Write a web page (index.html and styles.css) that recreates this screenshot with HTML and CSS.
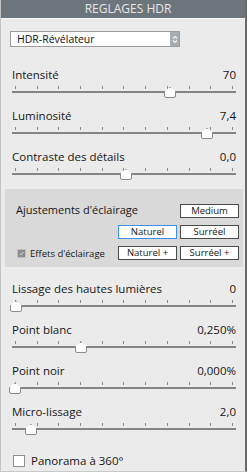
FILE: index.html
```html
<!DOCTYPE html>
<html lang="fr">
<head>
    <meta charset="UTF-8">
    <title>Réglages HDR</title>
    <link rel="stylesheet" href="styles.css">
</head>
<body>
    <div class="panel">
        <div class="panelHead">REGLAGES HDR</div>

        <div class="preset">
            <div class="presetText">HDR-Révélateur</div>
            <div class="presetArrow">
                <svg width="6" height="9" viewBox="0 0 6 9">
                    <path d="M1 3.5 L3 1.5 L5 3.5 M1 5.5 L3 7.5 L5 5.5" fill="none" stroke="#f4f4f4" stroke-width="1.2"/>
                </svg>
            </div>
        </div>

        <!-- curseurs du haut -->
        <div class="sliders top">
            <div class="slider">
                <div class="sliderLabel"><span>Intensité</span><span>70</span></div>
                <div class="sliderTrack">
                    <div class="ticks"><i></i><i></i><i></i><i></i><i></i><i></i><i></i><i></i><i></i><i></i><i></i></div>
                    <div class="line"></div>
                    <div class="thumb" style="left: 152px"></div>
                </div>
            </div>
            <div class="slider">
                <div class="sliderLabel"><span>Luminosité</span><span>7,4</span></div>
                <div class="sliderTrack">
                    <div class="ticks"><i></i><i></i><i></i><i></i><i></i><i></i><i></i><i></i><i></i><i></i><i></i></div>
                    <div class="line"></div>
                    <div class="thumb" style="left: 189px"></div>
                </div>
            </div>
            <div class="slider">
                <div class="sliderLabel"><span>Contraste des détails</span><span>0,0</span></div>
                <div class="sliderTrack">
                    <div class="ticks"><i></i><i></i><i></i><i></i><i></i><i></i><i></i><i></i><i></i><i></i><i></i></div>
                    <div class="line"></div>
                    <div class="thumb" style="left: 108px"></div>
                </div>
            </div>
        </div>

        <!-- ajustements d'eclairage -->
        <div class="lighting">
            <div class="lightRow">
                <div class="lightTitle">Ajustements d'éclairage</div>
                <div class="btn">Medium</div>
            </div>
            <div class="lightRow">
                <div class="btn selected">Naturel</div>
                <div class="btn">Surréel</div>
            </div>
            <div class="lightRow">
                <label class="effects">
                    <span class="checkOn">
                        <svg width="5" height="5" viewBox="0 0 5 5"><path d="M0.8 2.6 L2 3.8 L4.2 1" fill="none" stroke="#e8e8e8" stroke-width="0.9"/></svg>
                    </span>Effets d'éclairage</label>
                <div class="btn">Naturel +</div>
                <div class="btn">Surréel +</div>
            </div>
        </div>

        <!-- curseurs du bas -->
        <div class="sliders bottom">
            <div class="slider">
                <div class="sliderLabel"><span>Lissage des hautes lumières</span><span>0</span></div>
                <div class="sliderTrack">
                    <div class="ticks"><i></i><i></i><i></i><i></i><i></i><i></i><i></i><i></i><i></i><i></i><i></i></div>
                    <div class="line"></div>
                    <div class="thumb" style="left: -2px"></div>
                </div>
            </div>
            <div class="slider">
                <div class="sliderLabel"><span>Point blanc</span><span>0,250%</span></div>
                <div class="sliderTrack">
                    <div class="ticks"><i></i><i></i><i></i><i></i><i></i><i></i><i></i><i></i><i></i><i></i><i></i></div>
                    <div class="line"></div>
                    <div class="thumb" style="left: 63px"></div>
                </div>
            </div>
            <div class="slider">
                <div class="sliderLabel"><span>Point noir</span><span>0,000%</span></div>
                <div class="sliderTrack">
                    <div class="ticks"><i></i><i></i><i></i><i></i><i></i><i></i><i></i><i></i><i></i><i></i><i></i></div>
                    <div class="line"></div>
                    <div class="thumb" style="left: -3px"></div>
                </div>
            </div>
            <div class="slider">
                <div class="sliderLabel"><span>Micro-lissage</span><span>2,0</span></div>
                <div class="sliderTrack">
                    <div class="ticks"><i></i><i></i><i></i><i></i><i></i><i></i><i></i><i></i><i></i><i></i><i></i></div>
                    <div class="line"></div>
                    <div class="thumb" style="left: 13px"></div>
                </div>
            </div>
        </div>

        <label class="panorama"><span class="checkOff"></span>Panorama à 360°</label>
    </div>
</body>
</html>
```

FILE: styles.css
```css
body {
    margin: 0;
    font-family: "Open Sans", "DejaVu Sans", sans-serif;
    color: #151515;
    background: #ffffff;
}

.panel {
    width: 247px;
    height: 472px;
    box-sizing: border-box;
    background: #ebebeb;
    border-left: 1px solid #c4c4c4;
    border-right: 2px solid #6a6a6a;
    border-bottom: 1px solid #c8c8c8;
}

.panelHead {
    height: 18px;
    line-height: 18px;
    background: #6c747c;
    color: #e6e6e6;
    font-size: 12px;
    text-align: center;
    padding-left: 10px;
    border-bottom: 1px solid #f6f6f6;
}

.preset {
    display: flex;
    width: 170px;
    height: 16px;
    margin: 12px 0 0 9px;
    box-sizing: border-box;
    border: 1px solid #9c9c9c;
    background: #ffffff;
}

.presetText {
    flex: 1;
    font-size: 10.5px;
    line-height: 14px;
    padding-left: 6px;
    color: #111;
}

.presetArrow {
    width: 9px;
    background: #a8adb2;
    display: flex;
    align-items: center;
    justify-content: center;
}

.sliders {
    display: flex;
    flex-direction: column;
    gap: 10px;
    margin: 0 9px 0 11px;
}

.sliders.top {
    margin-top: 21px;
}

.sliders.bottom {
    margin-top: 15px;
}

.sliderLabel {
    display: flex;
    justify-content: space-between;
    font-size: 11.5px;
    line-height: 14px;
}

.sliderTrack {
    position: relative;
    height: 17px;
}

.ticks {
    display: flex;
    justify-content: space-between;
    padding: 4px 3px 0 3px;
}

.ticks i {
    width: 1px;
    height: 3px;
    background: #8a8a8a;
}

.line {
    height: 2px;
    margin-top: 2px;
    background: #858585;
}

.thumb {
    position: absolute;
    top: 5px;
    width: 12px;
    height: 11px;
    box-sizing: border-box;
    background: #ffffff;
    border: 1px solid #8a8a8a;
    border-radius: 2px;
    clip-path: polygon(50% 0, 100% 40%, 100% 100%, 0 100%, 0 40%);
}

.lighting {
    margin: 8px 2px 0 4px;
    padding: 15px 4px 7px 11px;
    background: #d9d9d9;
    display: flex;
    flex-direction: column;
    gap: 7px;
}

.lightRow {
    display: flex;
    justify-content: flex-end;
    align-items: center;
    gap: 3px;
}

.lightTitle {
    flex: 1;
    font-size: 11px;
    margin-top: -4px;
}

.btn {
    width: 59px;
    height: 14px;
    box-sizing: border-box;
    border: 1px solid #4a4a4a;
    background: #ffffff;
    font-size: 9.5px;
    line-height: 12px;
    text-align: center;
}

.btn.selected {
    border-color: #3d8ee8;
}

.effects {
    flex: 1;
    display: flex;
    align-items: center;
    font-size: 9.5px;
    gap: 4px;
}

.checkOn {
    width: 7px;
    height: 7px;
    margin-left: 1px;
    background: #8c8c8c;
    border: 1px solid #bdbdbd;
    display: flex;
    align-items: center;
    justify-content: center;
}

.panorama {
    display: flex;
    align-items: center;
    gap: 6px;
    margin: 17px 0 0 12px;
    font-size: 11.5px;
}

.checkOff {
    width: 12px;
    height: 12px;
    box-sizing: border-box;
    border: 1px solid #8f8f8f;
    background: #ffffff;
}
```
